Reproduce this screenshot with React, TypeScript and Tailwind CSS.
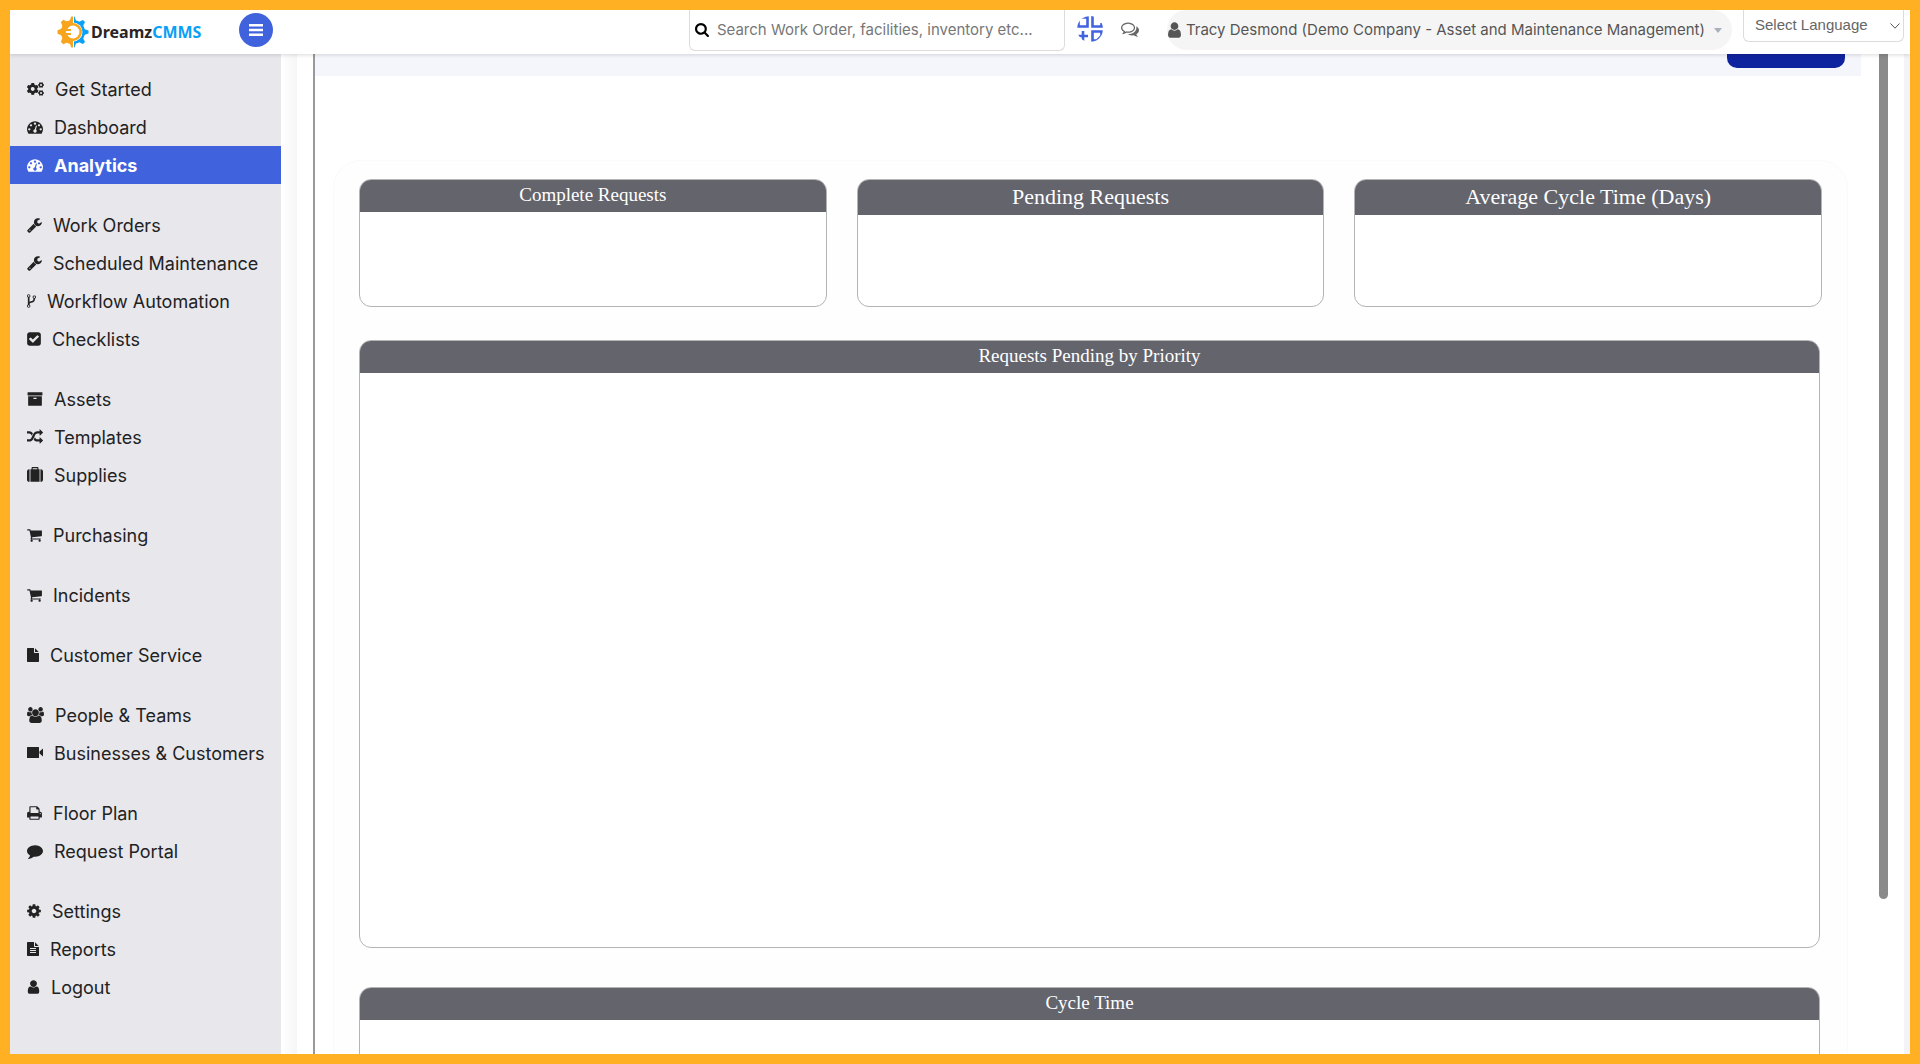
import React from "react";
import { FaCogs } from "react-icons/fa";

type Glyph = { box: string; w: string; d: string };

const G = {
  tachometer: { box: "0 0 1792 1792", w: "w-4", d: "M384 1152q0-53-37.5-90.5t-90.5-37.5-90.5 37.5-37.5 90.5 37.5 90.5 90.5 37.5 90.5-37.5 37.5-90.5zm192-448q0-53-37.5-90.5t-90.5-37.5-90.5 37.5-37.5 90.5 37.5 90.5 90.5 37.5 90.5-37.5 37.5-90.5zm428 481l101-382q6-26-7.5-48.5t-38.5-29.5-48 6.5-30 39.5l-101 382q-60 5-107 43.5t-63 98.5q-20 77 20 146t117 89 146-20 89-117q16-60-6-117t-72-91zm660-33q0-53-37.5-90.5t-90.5-37.5-90.5 37.5-37.5 90.5 37.5 90.5 90.5 37.5 90.5-37.5 37.5-90.5zm-640-640q0-53-37.5-90.5t-90.5-37.5-90.5 37.5-37.5 90.5 37.5 90.5 90.5 37.5 90.5-37.5 37.5-90.5zm448 192q0-53-37.5-90.5t-90.5-37.5-90.5 37.5-37.5 90.5 37.5 90.5 90.5 37.5 90.5-37.5 37.5-90.5zm320 448q0 261-141 483-19 29-54 29h-1402q-35 0-54-29-141-221-141-483 0-182 71-348t191-286 286-191 348-71 348 71 286 191 191 286 71 348z" },
  wrench: { box: "64 0 1664 1792", w: "w-[15px]", d: "M448 1472q0-26-19-45t-45-19-45 19-19 45 19 45 45 19 45-19 19-45zm644-420l-682 682q-37 37-90 37-52 0-91-37l-106-108q-38-36-38-90 0-53 38-91l681-681q39 98 114.5 173.5t173.5 114.5zm634-435q0 39-23 106-47 134-164.5 217.5t-258.5 83.5q-185 0-316.5-131.5t-131.5-316.5 131.5-316.5 316.5-131.5q58 0 121.5 16.5t107.5 46.5q16 11 16 28t-16 28l-293 169v224l193 107q5-3 79-48.5t135.5-81 70.5-35.5q15 0 23.5 10t8.5 25z" },
  fork: { box: "384 0 1024 1792", w: "w-[9px]", d: "M672 1472q0-40-28-68t-68-28-68 28-28 68 28 68 68 28 68-28 28-68zm0-1152q0-40-28-68t-68-28-68 28-28 68 28 68 68 28 68-28 28-68zm640 128q0-40-28-68t-68-28-68 28-28 68 28 68 68 28 68-28 28-68zm96 0q0 52-26 96.5t-70 69.5q-2 287-226 414-67 38-203 81-128 40-169.5 71t-41.5 100v26q44 25 70 69.5t26 96.5q0 80-56 136t-136 56-136-56-56-136q0-52 26-96.5t70-69.5v-820q-44-25-70-69.5t-26-96.5q0-80 56-136t136-56 136 56 56 136q0 52-26 96.5t-70 69.5v497q54-26 154-57 55-17 87.5-29.5t70.5-31 59-39.5 40.5-51 28-69.5 8.5-91.5q-44-25-70-69.5t-26-96.5q0-80 56-136t136-56 136 56 56 136z" },
  check: { box: "128 0 1536 1792", w: "w-[14px]", d: "M813 1299l614-614q19-19 19-45t-19-45l-102-102q-19-19-45-19t-45 19l-467 467-211-211q-19-19-45-19t-45 19l-102 102q-19 19-19 45t19 45l358 358q19 19 45 19t45-19zm851-883v960q0 119-84.5 203.5t-203.5 84.5h-960q-119 0-203.5-84.5t-84.5-203.5v-960q0-119 84.5-203.5t203.5-84.5h960q119 0 203.5 84.5t84.5 203.5z" },
  archive: { box: "0 0 1792 1792", w: "w-4", d: "M1088 832q0-26-19-45t-45-19h-256q-26 0-45 19t-19 45 19 45 45 19h256q26 0 45-19t19-45zm576-192v960q0 26-19 45t-45 19h-1408q-26 0-45-19t-19-45v-960q0-26 19-45t45-19h1408q26 0 45 19t19 45zm64-448v256q0 26-19 45t-45 19h-1536q-26 0-45-19t-19-45v-256q0-26 19-45t45-19h1536q26 0 45 19t19 45z" },
  random: { box: "0 0 1792 1792", w: "w-4", d: "M666 481q-60 92-137 273-22-45-37-72.5t-40.5-63.5-51-56.5-63-35-81.5-14.5h-224q-14 0-23-9t-9-23v-192q0-14 9-23t23-9h224q250 0 410 225zm1126 799q0 14-9 23l-320 320q-9 9-23 9-13 0-22.5-9.5t-9.5-22.5v-192q-32 0-85 .5t-81 1-73-1-71-5-64-10.5-63-18.5-58-28.5-59-40-55-53.5-56-69.5q59-93 136-273 22 45 37 72.5t40.5 63.5 51 56.5 63 35 81.5 14.5h256v-192q0-14 9-23t23-9q12 0 24 10l319 319q9 9 9 23zm0-896q0 14-9 23l-320 320q-9 9-23 9-13 0-22.5-9.5t-9.5-22.5v-192h-256q-48 0-87 15t-69 45-51 61.5-45 77.5q-32 62-78 171-29 66-49.5 111t-54 105-64 100-74 83-90 68.5-106.5 42-128 16.5h-224q-14 0-23-9t-9-23v-192q0-14 9-23t23-9h224q48 0 87-15t69-45 51-61.5 45-77.5q32-62 78-171 29-66 49.5-111t54-105 64-100 74-83 90-68.5 106.5-42 128-16.5h256v-192q0-14 9-23t23-9q12 0 24 10l319 319q9 9 9 23z" },
  suitcase: { box: "0 0 1792 1792", w: "w-4", d: "M640 256h512v-128h-512v128zm-352 0v1408h-64q-92 0-158-66t-66-158v-960q0-92 66-158t158-66h64zm1120 0v1408h-1024v-1408h128v-160q0-40 28-68t68-28h576q40 0 68 28t28 68v160h128zm384 224v960q0 92-66 158t-158 66h-64v-1408h64q92 0 158 66t66 158z" },
  cart: { box: "64 0 1664 1792", w: "w-[15px]", d: "M704 1536q0 52-38 90t-90 38-90-38-38-90 38-90 90-38 90 38 38 90zm896 0q0 52-38 90t-90 38-90-38-38-90 38-90 90-38 90 38 38 90zm128-1088v512q0 24-16.5 42.5t-40.5 21.5l-1044 122q13 60 13 70 0 16-24 64h920q26 0 45 19t19 45-19 45-45 19h-1024q-26 0-45-19t-19-45q0-11 8-31.5t16-36 21.5-40 15.5-29.5l-177-823h-204q-26 0-45-19t-19-45 19-45 45-19h256q16 0 28.5 6.5t19.5 15.5 13 24.5 8 26 5.5 29.5 4.5 26h1201q26 0 45 19t19 45z" },
  file: { box: "128 0 1536 1792", w: "w-3", d: "M1152 512v-472q22 14 36 28l408 408q14 14 28 36h-472zm-128 32q0 40 28 68t68 28h544v1056q0 40-28 68t-68 28h-1344q-40 0-68-28t-28-68v-1600q0-40 28-68t68-28h800v544z" },
  fileText: { box: "128 0 1536 1792", w: "w-3", d: "M1596 476q14 14 28 36h-472v-472q22 14 36 28zm-476 164h544v1056q0 40-28 68t-68 28h-1344q-40 0-68-28t-28-68v-1600q0-40 28-68t68-28h800v544q0 40 28 68t68 28zm160 736v-64q0-14-9-23t-23-9h-704q-14 0-23 9t-9 23v64q0 14 9 23t23 9h704q14 0 23-9t9-23zm0-256v-64q0-14-9-23t-23-9h-704q-14 0-23 9t-9 23v64q0 14 9 23t23 9h704q14 0 23-9t9-23zm0-256v-64q0-14-9-23t-23-9h-704q-14 0-23 9t-9 23v64q0 14 9 23t23 9h704q14 0 23-9t9-23z" },
  users: { box: "0 0 1920 1792", w: "w-[17px]", d: "M593 896q-162 5-265 128h-134q-82 0-138-40.5t-56-118.5q0-353 124-353 6 0 43.5 21t97.5 42.5 119 21.5q67 0 133-23-5 37-5 66 0 139 81 256zm1071 637q0 120-73 189.5t-194 69.5h-874q-121 0-194-69.5t-73-189.5q0-53 3.5-103.5t14-109 26.5-108.5 43-97.5 62-81 85.5-53.5 111.5-20q10 0 43 21.5t73 48 107 48 135 21.5 135-21.5 107-48 73-48 43-21.5q61 0 111.5 20t85.5 53.5 62 81 43 97.5 26.5 108.5 14 109 3.5 103.5zm-1024-1277q0 106-75 181t-181 75-181-75-75-181 75-181 181-75 181 75 75 181zm704 384q0 159-112.5 271.5t-271.5 112.5-271.5-112.5-112.5-271.5 112.5-271.5 271.5-112.5 271.5 112.5 112.5 271.5zm576 225q0 78-56 118.5t-138 40.5h-134q-103-123-265-128 81-117 81-256 0-29-5-66 66 23 133 23 59 0 119-21.5t97.5-42.5 43.5-21q124 0 124 353zm-128-609q0 106-75 181t-181 75-181-75-75-181 75-181 181-75 181 75 75 181z" },
  video: { box: "0 0 16 16", w: "w-4", d: "M1 2h10.500q.5 0 .5.500v10q0 .5-.5.5h-11q-.5 0-.5-.5v-10q0-.5.5-.5zM16 3.500v8l-3.500-3v-2z" },
  print: { box: "64 0 1664 1792", w: "w-[15px]", d: "M448 1536h896v-256h-896v256zm0-640h896v-384h-160q-40 0-68-28t-28-68v-160h-640v640zm1152 64q0-26-19-45t-45-19-45 19-19 45 19 45 45 19 45-19 19-45zm128 0v416q0 13-9.500 22.500t-22.500 9.500h-224v160q0 40-28 68t-68 28h-960q-40 0-68-28t-28-68v-160h-224q-13 0-22.500-9.500t-9.500-22.500v-416q0-79 56.500-135.500t135.500-56.500h64v-544q0-40 28-68t68-28h672q40 0 88 20t76 48l152 152q28 28 48 76t20 88v256h64q79 0 135.500 56.500t56.500 135.500z" },
  comment: { box: "0 0 1792 1792", w: "w-4", d: "M1792 896q0 174-120 321.5t-326 233-450 85.5q-70 0-145-8-198 175-460 242-49 14-114 22-17 2-30.500-9t-17.500-29v-1q-3-4-.5-12t2-10 4.500-9.500l6-9 7-8.500 8-9q7-8 31-34.500t34.500-38 31-39.500 32.500-51 27-59 26-76q-157-89-247.500-220t-90.500-281q0-130 71-248.500t191-204.500 286-136.500 348-50.500q244 0 450 85.500t326 233 120 321.500z" },
  cog: { box: "128 0 1536 1792", w: "w-[14px]", d: "M1152 896q0-106-75-181t-181-75-181 75-75 181 75 181 181 75 181-75 75-181zm512-109v222q0 12-8 23t-20 13l-185 28q-19 54-39 91 35 50 107 138 10 12 10 25t-9 23q-27 37-99 108t-94 71q-12 0-26-9l-138-108q-44 23-91 38-16 136-29 186-7 28-36 28h-222q-14 0-24.500-8.500t-11.500-21.500l-28-184q-49-16-90-37l-141 107q-10 9-25 9-14 0-25-11-126-114-165-168-7-10-7-23 0-12 8-23 15-21 51-66.500t54-70.500q-27-50-41-99l-183-27q-13-2-21-12.500t-8-23.500v-222q0-12 8-23t19-13l186-28q14-46 39-92-40-57-107-138-10-12-10-24 0-10 9-23 26-36 98.500-107.500t94.500-71.500q13 0 26 10l138 107q44-23 91-38 16-136 29-186 7-28 36-28h222q14 0 24.500 8.500t11.500 21.500l28 184q49 16 90 37l142-107q9-9 24-9 13 0 25 10 129 119 165 170 7 8 7 22 0 12-8 23-15 21-51 66.500t-54 70.500q26 50 41 98l183 28q13 2 21 12.500t8 23.500z" },
  user: { box: "256 0 1280 1792", w: "w-[13px]", d: "M1536 1399q0 109-62.500 187t-150.500 78h-854q-88 0-150.500-78t-62.500-187q0-85 8.500-160.500t31.500-152 58.500-131 94-89 134.500-34.500q131 128 313 128t313-128q76 0 134.500 34.500t94 89 58.500 131 31.500 152 8.500 160.500zm-256-887q0 159-112.500 271.500t-271.500 112.500-271.500-112.500-112.500-271.500 112.500-271.500 271.500-112.500 271.500 112.500 112.500 271.500z" },
  search: { box: "64 128 1664 1664", w: "w-[14px]", d: "M1216 832q0-185-131.500-316.500t-316.500-131.500-316.500 131.500-131.500 316.500 131.500 316.500 316.500 131.500 316.500-131.500 131.500-316.500zm512 832q0 52-38 90t-90 38q-54 0-90-38l-343-342q-179 124-399 124-143 0-273.500-55.500t-225-150-150-225-55.500-273.500 55.500-273.500 150-225 225-150 273.500-55.500 273.500 55.500 225 150 150 225 55.500 273.500q0 220-124 399l343 343q37 37 37 90z" },
  comments: { box: "0 0 1792 1792", w: "w-[18px]", d: "M704 384q-153 0-286 52t-211.500 141-78.500 191q0 82 53 158t149 132l97 56-35 84q34-20 62-39l44-31 53 10q78 14 153 14 153 0 286-52t211.500-141 78.500-191-78.500-191-211.500-141-286-52zm0-128q191 0 353.500 68.500t256.500 186.500 94 257-94 257-256.500 186.500-353.500 68.500q-86 0-176-16-124 88-278 128-36 9-86 16h-3q-11 0-20.500-8t-11.500-21q-1-3-1-6.500t.5-6.500 2-6l2.500-5 3.500-5.500 4-5 4.500-5 4-4.500q5-6 23-25t26-29.500 22.500-29 25-38.500 20.500-44q-124-72-195-177t-71-224q0-139 94-257t256.500-186.500 353.500-68.500zm822 1169q10 24 20.500 44t25 38.500 22.500 29 26 29.500 23 25q1 1 4 4.500t4.500 5 4 5 3.500 5.500l2.500 5 2 6 .5 6.500-1 6.500q-3 14-13 22t-22 7q-50-7-86-16-154-40-278-128-90 16-176 16-271 0-472-132 58 4 88 4 161 0 309-45t264-129q125-92 192-212t67-254q0-77-23-152 129 71 204 178t75 230q0 120-71 224.500t-195 176.500z" },
} satisfies Record<string, Glyph>;

function Icon({ glyph, className = "h-4" }: { glyph: Glyph; className?: string }) {
  return (
    <svg viewBox={glyph.box} className={`${glyph.w} ${className} shrink-0`} fill="currentColor" aria-hidden="true">
      <path d={glyph.d} />
    </svg>
  );
}

const groups: { label: string; glyph?: Glyph; active?: boolean }[][] = [
  [{ label: "Get Started" }, { label: "Dashboard", glyph: G.tachometer }, { label: "Analytics", glyph: G.tachometer, active: true }],
  [
    { label: "Work Orders", glyph: G.wrench },
    { label: "Scheduled Maintenance", glyph: G.wrench },
    { label: "Workflow Automation", glyph: G.fork },
    { label: "Checklists", glyph: G.check },
  ],
  [{ label: "Assets", glyph: G.archive }, { label: "Templates", glyph: G.random }, { label: "Supplies", glyph: G.suitcase }],
  [{ label: "Purchasing", glyph: G.cart }],
  [{ label: "Incidents", glyph: G.cart }],
  [{ label: "Customer Service", glyph: G.file }],
  [{ label: "People & Teams", glyph: G.users }, { label: "Businesses & Customers", glyph: G.video }],
  [{ label: "Floor Plan", glyph: G.print }, { label: "Request Portal", glyph: G.comment }],
  [{ label: "Settings", glyph: G.cog }, { label: "Reports", glyph: G.fileText }, { label: "Logout", glyph: G.user }],
];

function Logo() {
  const teeth = [0, 45, 90, 135, 180, 225, 270, 315];
  return (
    <a href="#home" className="flex items-center gap-[2px]" aria-label="DreamzCMMS">
      <svg viewBox="0 0 32 32" className="size-8 shrink-0" aria-hidden="true">
        <defs>
          <clipPath id="gearLeft"><path d="M0 0H16V32H0z" /></clipPath>
          <clipPath id="gearRight"><path d="M17 0H32V32H17z" /></clipPath>
        </defs>
        <g clipPath="url(#gearRight)" fill="#0aa0f5">
          <circle cx="16" cy="16" r="10.500" fill="none" stroke="#0aa0f5" strokeWidth="3" />
          {teeth.map((a) => <path key={a} d="M13 5L14.500.500H17.500L19 5z" transform={`rotate(${a} 16 16)`} />)}
        </g>
        <g clipPath="url(#gearLeft)" fill="#f7a51c">
          <circle cx="16" cy="16" r="12" />
          {teeth.map((a) => <path key={a} d="M12.500 5L14.300.500H17.700L19.500 5z" transform={`rotate(${a} 16 16)`} />)}
        </g>
        <circle cx="16" cy="16" r="9.500" fill="#fff" />
        <path d="M16 4A12 12 0 0 0 16 28V22.500A6.500 6.500 0 0 1 10.500 19H14V17H9V15H14V13H10.500A6.500 6.500 0 0 1 16 9.500z" fill="#f7a51c" />
        <path d="M16 8.300A7.700 7.700 0 0 1 16 23.700" fill="none" stroke="#f7a51c" strokeWidth="2.500" />
      </svg>
      <span className="font-['Noto_Sans'] text-[16px] leading-6 font-bold text-[#2a2426]">
        Dreamz<span className="text-[#0aa0f5]">CMMS</span>
      </span>
    </a>
  );
}

function FullscreenIcon() {
  return (
    <svg viewBox="0 0 26 26" className="size-[26px]" fill="none" stroke="#4163de" strokeWidth="2.600" aria-hidden="true">
      <defs><clipPath id="round"><circle cx="13" cy="13" r="13" /></clipPath></defs>
      <g clipPath="url(#round)">
        <path d="M1.500 1.500H10.500V10.500H1.500zM15.500 0V10.500H26M24.500 11V7M6 15V25M0 20H11M15.500 15.500H24.500V20L20 24.500H15.500z" />
      </g>
    </svg>
  );
}

function Header() {
  return (
    <header className="relative z-10 flex h-11 shrink-0 items-start bg-white text-[#555] shadow-[0_1px_4px_rgba(0,0,0,0.15)]">
      <div className="flex h-11 items-center pl-[47px]">
        <Logo />
      </div>
      <button type="button" aria-label="Toggle menu" className="mt-[3px] ml-[38px] flex size-[34px] items-center justify-center rounded-full bg-[#4062dd] text-white">
        <svg viewBox="0 0 14 12" className="h-3 w-[14px]" fill="currentColor" aria-hidden="true">
          <path d="M0 0h14v2.500H0zM0 4.700h14v2.500H0zM0 9.400h14v2.500H0z" />
        </svg>
      </button>
      <div className="ml-auto flex items-start">
        <label className="flex h-[41px] w-[376px] items-center gap-2 rounded-b-md border border-t-0 border-[#dcdcdc] px-[5px] text-black">
          <Icon glyph={G.search} className="h-[14px]" />
          <input type="text" aria-label="Search" placeholder="Search Work Order, facilities, inventory etc..." className="w-full bg-transparent text-[15px] text-[#777] outline-none placeholder:text-[#777]" />
        </label>
        <button type="button" aria-label="Full screen" className="mt-[6px] ml-3">
          <FullscreenIcon />
        </button>
        <button type="button" aria-label="Messages" className="mt-[10px] ml-[18px] text-[#666]">
          <Icon glyph={G.comments} className="h-[18px]" />
        </button>
        <button type="button" className="ml-[28px] flex h-10 items-center gap-[5px] rounded-full bg-[#f5f5f5] pr-[10px] pl-[1px] text-[15px] whitespace-nowrap">
          <Icon glyph={G.user} className="h-[18px]" />
          Tracy Desmond (Demo Company - Asset and Maintenance Management)
          <svg viewBox="0 0 8 5" className="ml-1 h-[5px] w-2" fill="#a9afbd" aria-hidden="true"><path d="M0 0h8L4 5z" /></svg>
        </button>
        <div className="relative mr-[6px] ml-[11px]">
          <select aria-label="Select Language" className="h-8 w-[161px] appearance-none rounded-b-md border border-t-0 border-[#dcdcdc] bg-white pl-[11px] font-['Liberation_Sans'] text-[15px] text-[#666]">
            <option>Select Language</option>
          </select>
          <svg viewBox="0 0 10 6" className="pointer-events-none absolute top-[13px] right-[4px] h-[6px] w-[10px]" fill="none" stroke="#555" aria-hidden="true">
            <path d="M.5.5L5 5.200L9.500.500" />
          </svg>
        </div>
      </div>
    </header>
  );
}

function Sidebar() {
  return (
    <nav className="flex w-[271px] shrink-0 flex-col gap-[22px] overflow-hidden bg-[#e8e7ec] pt-4 text-[#222]">
      {groups.map((group) => (
        <ul key={group[0].label}>
          {group.map((item) => (
            <li key={item.label}>
              <a
                href="#nav"
                className={`flex h-[38px] items-center gap-[11px] pl-[17px] text-[18px] whitespace-nowrap ${item.active ? "bg-[#4062dd] font-bold text-white" : ""}`}
              >
                {item.glyph ? <Icon glyph={item.glyph} /> : <FaCogs className="h-4 w-[17px] shrink-0" />}
                {item.label}
              </a>
            </li>
          ))}
        </ul>
      ))}
    </nav>
  );
}

function Card({ title, className, titleClass = "h-8 text-[19px]" }: { title: string; className: string; titleClass?: string }) {
  return (
    <section className={`overflow-hidden rounded-xl border border-[#b4b4b4] bg-white ${className}`}>
      <h2 className={`flex items-center justify-center bg-[#64646d] pb-[2px] font-['Liberation_Serif'] text-white ${titleClass}`}>{title}</h2>
    </section>
  );
}

export default function App() {
  return (
    <div className="flex h-screen flex-col overflow-hidden border-[10px] border-[#ffb023] bg-white font-['Inter',sans-serif]">
      <Header />
      <div className="flex min-h-0 flex-1">
        <Sidebar />
        <div className="w-4 shrink-0 bg-linear-to-r from-white to-[#f6f6f6]" />
        <main className="ml-4 min-w-0 flex-1 overflow-hidden border-l-2 border-[#999]">
          <div className="flex h-[22px] items-start justify-end bg-[#f4f6fc] pr-4">
            <button type="button" aria-label="Apply" className="h-[14px] w-[118px] rounded-b-[10px] bg-[#10239e]" />
          </div>
          <div className="mt-[84px] mr-[13px] ml-[18px] rounded-t-[28px] border border-[#fafafa] bg-[#fefefe] px-[25px] pt-[18px]">
            <div className="grid grid-cols-3 gap-[30px]">
              <Card title="Complete Requests" className="h-32" />
              <Card title="Pending Requests" className="h-32" titleClass="h-[35px] text-[22px]" />
              <Card title="Average Cycle Time (Days)" className="h-32" titleClass="h-[35px] text-[22px]" />
            </div>
            <Card title="Requests Pending by Priority" className="mt-[33px] mr-[2px] h-[608px]" />
            <Card title="Cycle Time" className="mt-[39px] mr-[2px] h-[608px]" />
          </div>
        </main>
        <div className="mr-4 ml-[18px] h-[84.5%] w-[9px] shrink-0 rounded-b-full bg-[#8a8a8a]" />
        <div className="w-[6px] shrink-0 bg-[#f4f4f6]" />
      </div>
    </div>
  );
}
